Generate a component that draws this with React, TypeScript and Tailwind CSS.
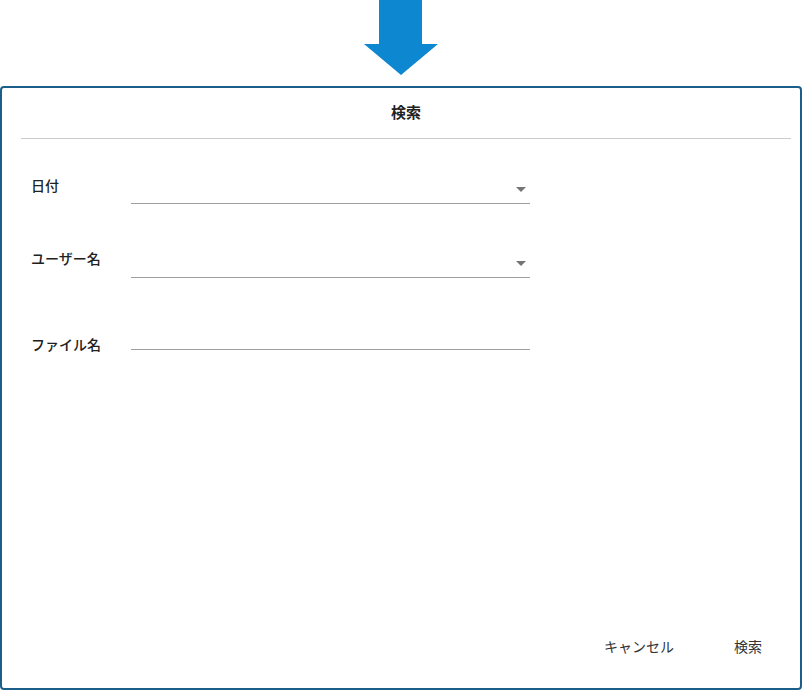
import React from "react";

const font = { fontFamily: '"Noto Sans CJK JP", "Noto Sans", sans-serif' };

function SelectField() {
  return (
    <div className="relative h-[30px] w-[399px] border-b border-[#9e9e9e]">
      <svg className="absolute right-[4px] top-[13px]" width="10" height="5" viewBox="0 0 10 5">
        <path d="M0 0 L10 0 L5 5 Z" fill="#757575" />
      </svg>
    </div>
  );
}

export default function App() {
  return (
    <div className="flex h-[690px] w-[802px] flex-col bg-white text-[#212121]" style={font}>
      <div className="flex justify-center">
        <svg width="76" height="76" viewBox="0 0 76 76">
          <path d="M16 0 L59 0 L59 44 L75 44 L38 75 L1 44 L16 44 Z" fill="#0d87d0" />
        </svg>
      </div>
      <div className="mt-[10px] flex h-[604px] flex-col rounded-[4px] border-2 border-[#1b5e8a]">
        <div className="ml-[19px] mr-[9px] pt-[14px] text-center text-[15px] font-bold leading-[20px]">検索</div>
        <div className="ml-[19px] mr-[9px] mt-[16px] h-px bg-[#cccccc]" />

        <div className="pl-[29px]">
          <div className="mt-[35px] flex items-start">
            <span className="mt-[1px] w-[100px] text-[14px] font-medium leading-[20px]">日付</span>
            <SelectField />
          </div>
          <div className="mt-[44px] flex items-start">
            <span className="w-[100px] text-[14px] font-medium leading-[20px]">ユーザー名</span>
            <SelectField />
          </div>
          <div className="mt-[42px] flex items-start">
            <span className="mt-[14px] w-[100px] text-[14px] font-medium leading-[20px]">ファイル名</span>
            <div className="h-[30px] w-[399px] border-b border-[#9e9e9e]" />
          </div>
        </div>

        <div className="mt-auto flex justify-end gap-[60px] pb-[32px] pr-[38px] text-[14px] leading-[20px] text-[#333333]">
          <button type="button">キャンセル</button>
          <button type="button">検索</button>
        </div>
      </div>
    </div>
  );
}
